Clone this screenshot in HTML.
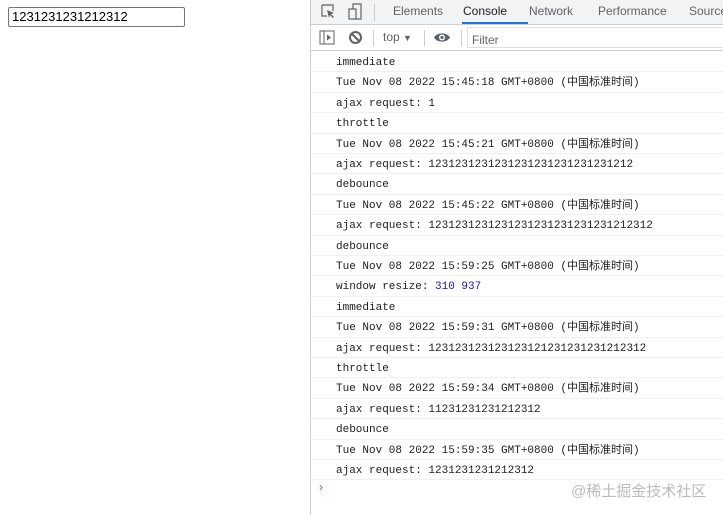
<!DOCTYPE html>
<html><head><meta charset="utf-8"><style>
*{box-sizing:border-box;margin:0;padding:0}
body{width:723px;height:515px;background:#fff;position:relative;overflow:hidden;font-family:"Liberation Sans","Noto Sans CJK SC",sans-serif}
.inp{position:absolute;left:8px;top:7px;width:177px;height:20px;border:1px solid #767676;border-radius:2px;font-size:13px;padding:1px 3px;color:#000;line-height:16px}
.dt{position:absolute;left:310px;top:0;width:413px;height:515px;border-left:1px solid #cbcdd1;background:#fff}
.tabs{height:25px;background:#f1f3f4;border-bottom:1px solid #cbcdd1;position:relative;font-size:12px;color:#5f6368}
.tabs span{position:absolute;top:4px}
.tb{height:26px;border-bottom:1px solid #cbcdd1;position:relative;font-size:12px;color:#5f6368;background:#fff}
.row{position:absolute;left:0;width:413px;height:20.4px;border-bottom:1px solid #f0f0f0;font-family:"Liberation Mono","Noto Sans CJK SC",monospace;font-size:11px;color:#202124;padding-left:25px;line-height:22px;white-space:pre}
.n{color:#1a1aa6}
</style></head><body>
<div class="inp">1231231231212312</div>
<div class="dt">
<div class="tabs">
<svg style="position:absolute;left:10px;top:4px" width="14" height="15"><path d="M1 1h11v6M1 1v11h5" fill="none" stroke="#5f6368" stroke-width="1.2"/><path d="M6 6l7 3-3 1 3 3-1 1-3-3-1 3z" fill="#5f6368"/></svg>
<svg style="position:absolute;left:37px;top:3px" width="14" height="17"><rect x="1" y="6" width="7" height="10" fill="none" stroke="#5f6368" stroke-width="1.2"/><path d="M5 6V1h8v15H8" fill="none" stroke="#5f6368" stroke-width="1.2"/></svg>
<div style="position:absolute;left:63px;top:4px;width:1px;height:17px;background:#cbcdd1"></div>
<span style="left:82px">Elements</span>
<span style="left:152px;color:#202124">Console</span>
<div style="position:absolute;left:151px;top:22px;width:66px;height:2px;background:#1a73e8"></div>
<span style="left:218px">Network</span>
<span style="left:287px">Performance</span>
<span style="left:378px">Sources</span>
</div>
<div class="tb">
<svg style="position:absolute;left:8px;top:5px" width="16" height="15"><rect x="1" y="1" width="14" height="13" fill="none" stroke="#5f6368"/><path d="M5 1v13" stroke="#5f6368"/><path d="M8 4.5l4 3-4 3z" fill="#5f6368"/></svg>
<svg style="position:absolute;left:37px;top:5px" width="15" height="15"><circle cx="7.5" cy="7.5" r="5.5" fill="none" stroke="#5f6368" stroke-width="2"/><path d="M3.5 3.5l8 8" stroke="#5f6368" stroke-width="2"/></svg>
<div style="position:absolute;left:62px;top:5px;width:1px;height:16px;background:#cbcdd1"></div>
<span style="position:absolute;left:72px;top:5px">top <span style="font-size:9px">▼</span></span>
<div style="position:absolute;left:113px;top:5px;width:1px;height:16px;background:#cbcdd1"></div>
<svg style="position:absolute;left:122px;top:6px" width="18" height="13"><path d="M1 6.5C4 1 14 1 17 6.5 14 12 4 12 1 6.5z" fill="#5f6368"/><circle cx="9" cy="6.5" r="3" fill="#fff"/><circle cx="9" cy="6.5" r="1.6" fill="#5f6368"/></svg>
<div style="position:absolute;left:150px;top:5px;width:1px;height:16px;background:#cbcdd1"></div>
<div style="position:absolute;left:156px;top:2px;width:260px;height:21px;border:1px solid #e0e0e0;border-right:none;padding:5px 4px;font-size:12px;color:#5f6368">Filter</div>
</div>
<div class="row" style="top:52px">immediate</div>
<div class="row" style="top:72.4px">Tue Nov 08 2022 15:45:18 GMT+0800 (中国标准时间)</div>
<div class="row" style="top:92.8px">ajax request: 1</div>
<div class="row" style="top:113.2px">throttle</div>
<div class="row" style="top:133.6px">Tue Nov 08 2022 15:45:21 GMT+0800 (中国标准时间)</div>
<div class="row" style="top:154px">ajax request: 1231231231231231231231231231212</div>
<div class="row" style="top:174.4px">debounce</div>
<div class="row" style="top:194.8px">Tue Nov 08 2022 15:45:22 GMT+0800 (中国标准时间)</div>
<div class="row" style="top:215.2px">ajax request: 1231231231231231231231231231212312</div>
<div class="row" style="top:235.6px">debounce</div>
<div class="row" style="top:256px">Tue Nov 08 2022 15:59:25 GMT+0800 (中国标准时间)</div>
<div class="row" style="top:276.4px">window resize: <span class="n">310 937</span></div>
<div class="row" style="top:296.8px">immediate</div>
<div class="row" style="top:317.2px">Tue Nov 08 2022 15:59:31 GMT+0800 (中国标准时间)</div>
<div class="row" style="top:337.6px">ajax request: 123123123123123121231231231212312</div>
<div class="row" style="top:358px">throttle</div>
<div class="row" style="top:378.4px">Tue Nov 08 2022 15:59:34 GMT+0800 (中国标准时间)</div>
<div class="row" style="top:398.8px">ajax request: 11231231231212312</div>
<div class="row" style="top:419.2px">debounce</div>
<div class="row" style="top:439.6px">Tue Nov 08 2022 15:59:35 GMT+0800 (中国标准时间)</div>
<div class="row" style="top:460px">ajax request: 1231231231212312</div>
<div style="position:absolute;left:8px;top:480px;color:#1a73e8;font-size:12px">›</div>
<div style="position:absolute;left:260px;top:480px;color:#bbb;font-size:15px;font-family:'Liberation Sans','Noto Sans CJK SC',sans-serif">@稀土掘金技术社区</div>
</div>
</body></html>
